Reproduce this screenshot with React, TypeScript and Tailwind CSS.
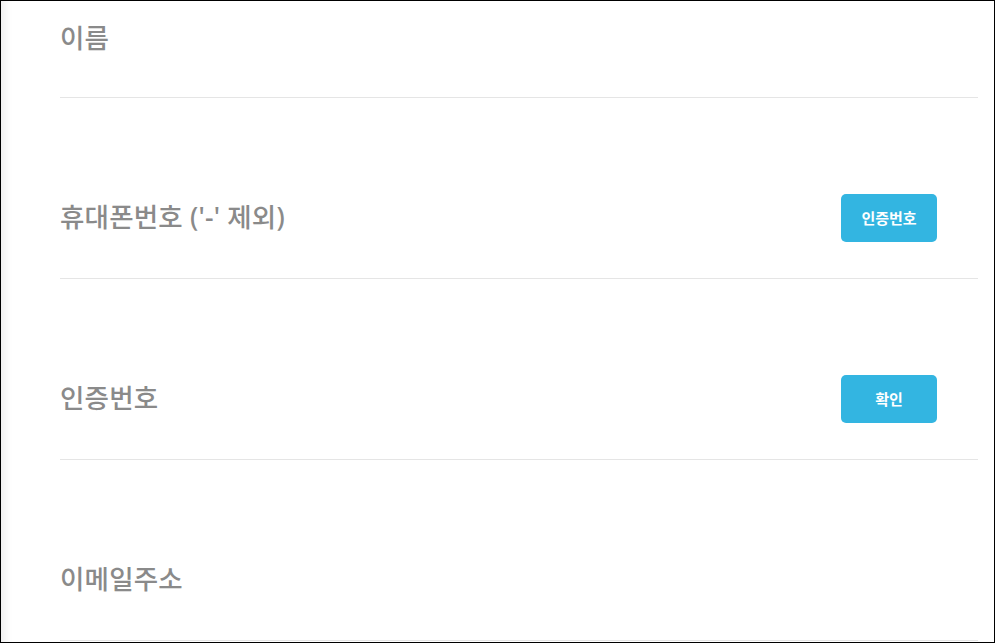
import React from "react";

const font = { fontFamily: '"Noto Sans", "Noto Sans CJK KR", sans-serif' };

function Row({ label, button, first }: { label: string; button?: string; first?: boolean }) {
  return (
    <div
      className={
        "flex items-center justify-between border-b border-[#e5e5e5] " +
        (first ? "h-[97px] pb-[22px]" : "h-[181px] pt-[58px]")
      }
    >
      <span className="text-[26.5px] font-medium tracking-[0.2px] text-[#8a8a8a] leading-none">{label}</span>
      {button && (
        <button className="mr-[41px] mt-[2px] flex h-[48px] w-[96px] items-center justify-center rounded-[5px] bg-[#33b5e1] text-[15px] font-bold text-white">
          {button}
        </button>
      )}
    </div>
  );
}

export default function App() {
  return (
    <div
      style={font}
      className="h-[643px] w-[995px] overflow-hidden border border-black bg-white shadow-[inset_12px_0_8px_-8px_rgba(0,0,0,0.07)]"
    >
      <div className="pl-[59px] pr-[16px]">
        <Row label="이름" first />
        <Row label="휴대폰번호 ('-' 제외)" button="인증번호" />
        <Row label="인증번호" button="확인" />
        <Row label="이메일주소" />
      </div>
    </div>
  );
}
